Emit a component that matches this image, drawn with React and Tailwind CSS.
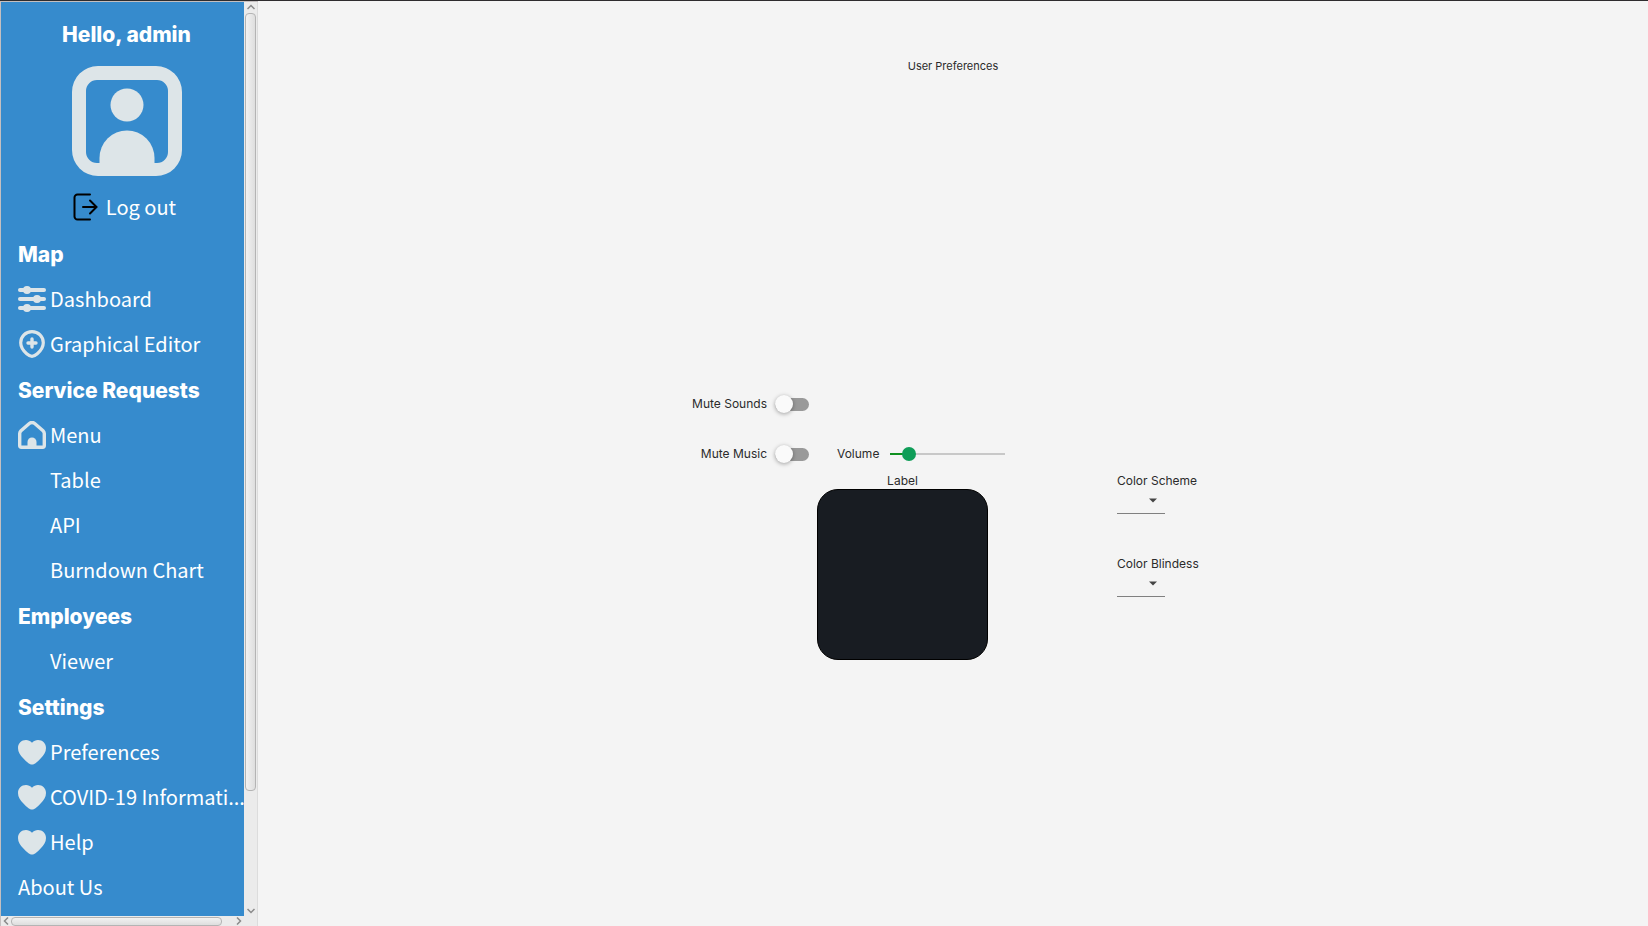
import { useState } from "react";

const ICON = "h-7 w-7 shrink-0 text-[#dde5e8]";

function SlidersIcon() {
  return (
    <svg viewBox="0 0 28 28" className={ICON} fill="currentColor" aria-hidden="true">
      <rect x="0" y="3" width="28" height="4" rx="2" />
      <rect x="0" y="12" width="28" height="4" rx="2" />
      <rect x="0" y="21" width="28" height="4" rx="2" />
      <circle cx="9" cy="5" r="4" />
      <circle cx="19" cy="14" r="4" />
      <circle cx="9" cy="23" r="4" />
    </svg>
  );
}

function PinIcon() {
  return (
    <svg viewBox="0 0 28 28" className={ICON} fill="none" stroke="currentColor" strokeLinecap="round" aria-hidden="true">
      <path d="M14 1.7C7.6 1.7 2.7 6.6 2.7 12.8c0 5 2.8 8.2 6 11 1.8 1.6 3.4 2.5 5.3 2.5s3.5-.9 5.3-2.5c3.2-2.8 6-6 6-11C25.3 6.6 20.4 1.7 14 1.7z" strokeWidth="3.2" />
      <path d="M14 9v8M10 13h8" strokeWidth="3.4" />
    </svg>
  );
}

function HomeIcon() {
  return (
    <svg viewBox="0 0 28 28" className={ICON} aria-hidden="true">
      <path d="M1.7 12.6c0-1.2.4-2 1.3-2.9l8.3-7.2c1.7-1.3 3.7-1.3 5.4 0L25 9.7c.9.9 1.3 1.7 1.3 2.9v12c0 1-.7 1.7-1.7 1.7H3.4c-1 0-1.7-.7-1.7-1.7z" fill="none" stroke="currentColor" strokeWidth="3.4" />
      <path d="M9.5 26v-5a4.500 4.500 0 0 1 9 0v5z" fill="currentColor" />
    </svg>
  );
}

function HeartIcon() {
  return (
    <svg viewBox="0 0 28 28" className={ICON} fill="currentColor" aria-hidden="true">
      <path d="M14 4.8C12.3 2.800 10.200 1.900 8 1.900 3.400 1.900 0 5.200 0 9.900c0 4.200 2.300 7.300 5.200 10.400 1.700 1.900 3.500 3.700 5.300 5 1.200.9 2.300 1.200 3.500 1.200s2.300-.3 3.500-1.200c1.800-1.300 3.600-3.100 5.300-5C25.700 17.200 28 14.100 28 9.900c0-4.700-3.400-8-8-8-2.200 0-4.300.9-6 2.900z" />
    </svg>
  );
}

function AvatarIcon() {
  return (
    <svg viewBox="0 0 110 110" className="h-[110px] w-[110px] text-[#dde5e8]" aria-hidden="true">
      <path
        d="M26 0h58a26 26 0 0 1 26 26v58a26 26 0 0 1-26 26H26a26 26 0 0 1-26-26V26A26 26 0 0 1 26 0zM25 14A11 11 0 0 0 14 25v61a11 11 0 0 0 11 11h60a11 11 0 0 0 11-11V25a11 11 0 0 0-11-11z"
        fill="currentColor"
        fillRule="evenodd"
      />
      <circle cx="55" cy="39" r="16.500" fill="currentColor" />
      <path d="M27.500 98V92a27.500 27.500 0 0 1 55 0V98z" fill="currentColor" />
    </svg>
  );
}

function LogOutIcon() {
  return (
    <svg viewBox="0 0 25 28" className="h-7 w-[25px] shrink-0 text-black" fill="none" stroke="currentColor" strokeWidth="2" strokeLinecap="round" aria-hidden="true">
      <path d="M17 1.500H4.500a3 3 0 0 0-3 3v19a3 3 0 0 0 3 3H17" />
      <path d="M10 14h13.500M17 7.500l6.500 6.500-6.500 6.500" />
    </svg>
  );
}

function Chevron({ d, className = "" }) {
  return (
    <svg viewBox="0 0 8 8" className={"h-2 w-2 shrink-0 " + className} fill="none" stroke="#8a8a8a" strokeWidth="1.500" aria-hidden="true">
      <path d={d} />
    </svg>
  );
}

const sections = [
  { title: "Map", items: [{ label: "Dashboard", Icon: SlidersIcon }, { label: "Graphical Editor", Icon: PinIcon }] },
  {
    title: "Service Requests",
    items: [{ label: "Menu", Icon: HomeIcon }, { label: "Table" }, { label: "API" }, { label: "Burndown Chart" }],
  },
  { title: "Employees", items: [{ label: "Viewer" }] },
  {
    title: "Settings",
    items: [
      { label: "Preferences", Icon: HeartIcon },
      { label: "COVID-19 Informati...", Icon: HeartIcon },
      { label: "Help", Icon: HeartIcon },
      { label: "About Us", flush: true },
    ],
  },
];

function Sidebar() {
  return (
    <aside className="grid w-[258px] shrink-0 grid-cols-[243px_1fr] grid-rows-[1fr_10px] border-t border-l border-[#c4bfc0] bg-[#ebebeb]">
      <div className="overflow-hidden bg-[#368bcd] text-[20px] text-white">
        <div className="flex flex-col items-center pl-2">
          <h1 className="mt-[17px] font-[Inter] text-[21px] leading-8 font-extrabold">Hello, admin</h1>
          <div className="mt-[15px]">
            <AvatarIcon />
          </div>
          <button type="button" className="mt-[9px] flex h-[46px] items-center gap-2 pr-1 pb-0.5">
            <LogOutIcon />
            Log out
          </button>
        </div>
        <nav className="pl-[17px]">
          {sections.map(({ title, items }) => (
            <section key={title}>
              <h2 className="flex h-[46px] items-center pt-0.5 font-[Inter] text-[21px] font-extrabold">{title}</h2>
              <ul>
                {items.map(({ label, Icon, flush }) => (
                  <li key={label}>
                    <a href="#" className="flex h-[45px] items-center gap-1 pb-0.5 whitespace-nowrap">
                      {Icon ? <Icon /> : flush ? null : <span className="w-7 shrink-0" />}
                      {label}
                    </a>
                  </li>
                ))}
              </ul>
            </section>
          ))}
        </nav>
      </div>
      <div className="flex flex-col items-center border-r border-[#dcdcdc] py-px" aria-hidden="true">
        <Chevron d="M0.500 6L4 2.500 7.500 6" className="mb-[2px]" />
        <div className="w-full flex-1 px-px">
          <div className="h-[87%] rounded border border-[#b4b4b4] bg-linear-to-r from-[#f2f2f2] to-[#dedede]" />
        </div>
        <Chevron d="M0.500 2L4 5.500 7.500 2" />
      </div>
      <div className="flex items-center px-px" aria-hidden="true">
        <Chevron d="M6 0.500L2.500 4 6 7.500" className="mr-px" />
        <div className="h-[9px] flex-1">
          <div className="h-full w-[94%] rounded border border-[#b4b4b4] bg-linear-to-b from-[#f2f2f2] to-[#dedede]" />
        </div>
        <Chevron d="M2 0.500L5.500 4 2 7.500" />
      </div>
      <div className="border-r border-[#dcdcdc]" />
    </aside>
  );
}

function Toggle({ label }) {
  return (
    <label className="flex h-8 items-center justify-end gap-2 whitespace-nowrap">
      {label}
      <input
        type="checkbox"
        role="switch"
        className="flex h-[13px] w-[34px] shrink-0 appearance-none items-center rounded-full bg-[#999999] before:h-[18px] before:w-[18px] before:shrink-0 before:rounded-full before:bg-[#fafafa] before:shadow-[0_1px_4px_rgba(0,0,0,0.35)] checked:justify-end checked:bg-[#0f9d58]"
      />
    </label>
  );
}

function Picker({ label }) {
  return (
    <label className="flex flex-col items-start whitespace-nowrap">
      {label}
      <span className="relative block">
        <select className="h-[25px] w-12 appearance-none border-b border-[#808080] bg-transparent" defaultValue="">
          <option value="" />
        </select>
        <svg viewBox="0 0 8 5" className="pointer-events-none absolute top-[9px] right-2 h-[5px] w-2" aria-hidden="true">
          <path d="M0 0.500h8L4 4.500z" fill="#444" />
        </svg>
      </span>
    </label>
  );
}

function Preferences() {
  const [volume, setVolume] = useState(12);
  return (
    <main className="flex flex-1 flex-col items-center pt-[57px] font-[Inter] text-[#2b2b2b]">
      <h2 className="text-[11px] leading-4">User Preferences</h2>
      <div className="mt-[314px] flex items-start gap-[113px] text-[12px] leading-4">
        <div className="grid grid-cols-[114px_171px] gap-x-2 pr-4">
          <div className="col-span-2 mb-[18px] grid grid-cols-subgrid">
            <Toggle label="Mute Sounds" />
          </div>
          <Toggle label="Mute Music" />
          <label className="flex items-center gap-[11px] pl-5 whitespace-nowrap">
            Volume
            <input
              type="range"
              min="0"
              max="100"
              value={volume}
              onChange={(e) => setVolume(Number(e.target.value))}
              style={{ "--filled": volume + "%" }}
              className="h-4 w-[115px] shrink-0 appearance-none bg-transparent [&::-webkit-slider-runnable-track]:h-[2px] [&::-webkit-slider-runnable-track]:bg-[linear-gradient(to_right,#0f9020_var(--filled),#c8c8c8_var(--filled))] [&::-webkit-slider-thumb]:mt-[-6px] [&::-webkit-slider-thumb]:h-[14px] [&::-webkit-slider-thumb]:w-[14px] [&::-webkit-slider-thumb]:appearance-none [&::-webkit-slider-thumb]:rounded-full [&::-webkit-slider-thumb]:bg-[#0f9d58]"
            />
          </label>
          <div className="col-start-2 pt-[3px] text-center">
            <p>Label</p>
            <div className="h-[171px] w-[171px] rounded-[21px] border border-black bg-[#181c22]" />
          </div>
        </div>
        <div className="flex w-[94px] flex-col gap-[42px] pt-[85px]">
          <Picker label="Color Scheme" />
          <Picker label="Color Blindess" />
        </div>
      </div>
    </main>
  );
}

export default function App() {
  return (
    <div className="flex min-h-screen border-t border-[#2e2c2e] bg-[#f4f4f4] font-['Noto_Sans_CJK_SC',sans-serif]">
      <Sidebar />
      <Preferences />
    </div>
  );
}
